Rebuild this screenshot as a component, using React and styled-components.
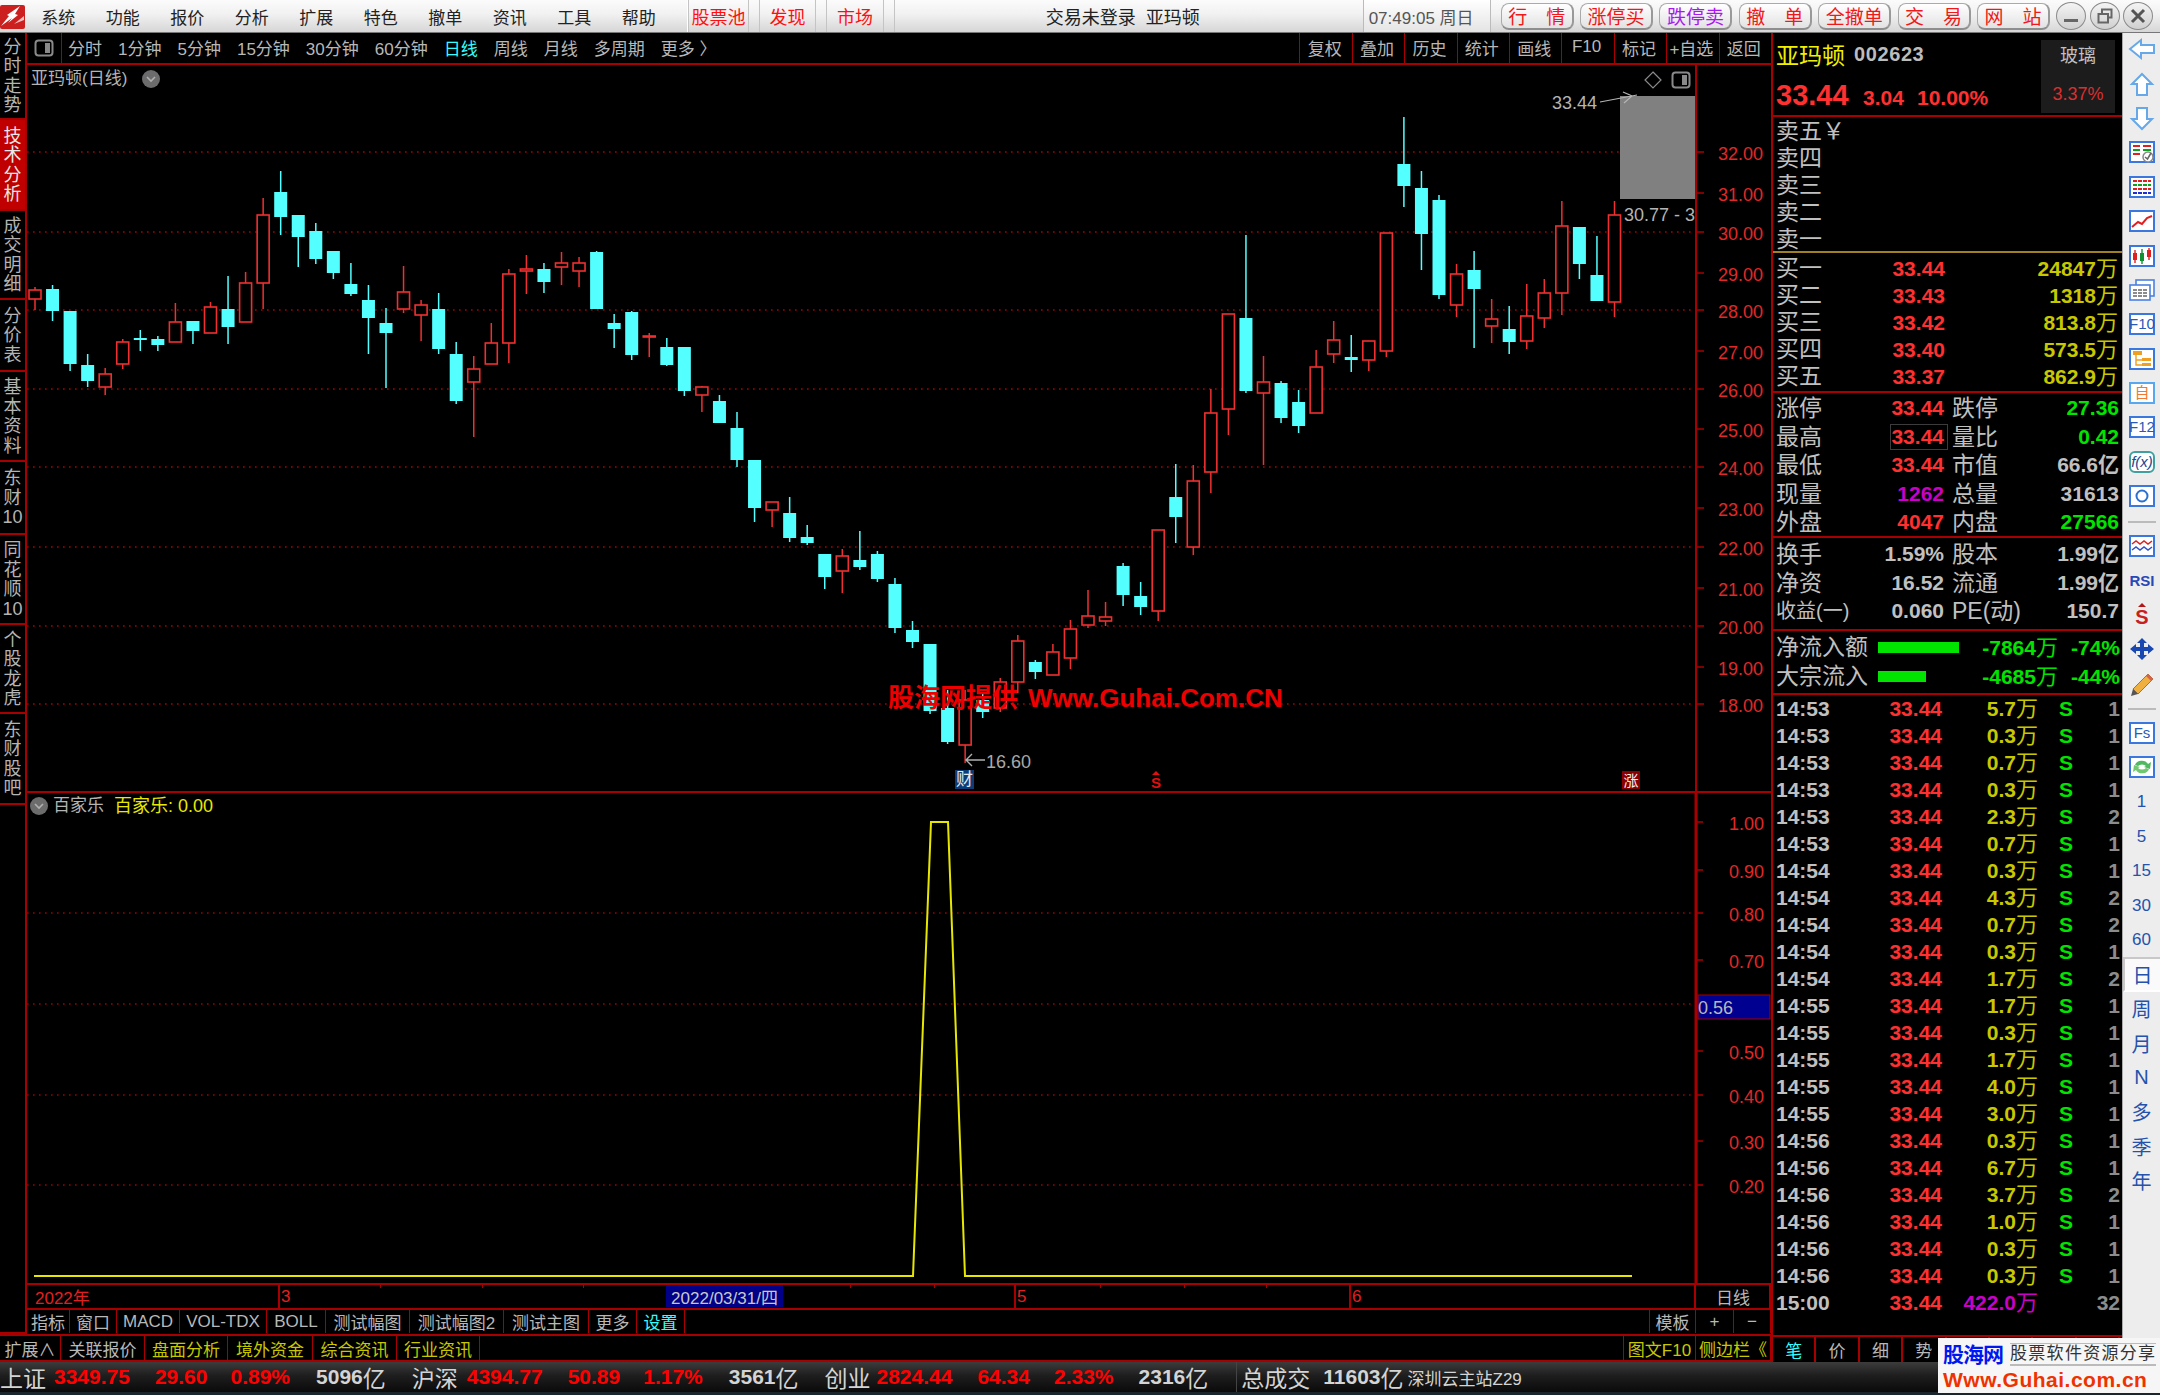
import React from 'react';
import styled, { createGlobalStyle } from 'styled-components';

const RED = '#a80000';
const NUM = '"Liberation Sans", "Noto Sans CJK SC", sans-serif';

// kind(1 = red hollow), wickTop, bodyTop, bodyBottom, wickBottom, all in page px
const candles = [
  [1, 287, 290, 299, 310], [0, 285, 289, 311, 321], [0, 311, 311, 364, 371], [0, 354, 365, 381, 387],
  [1, 368, 374, 387, 395], [1, 339, 342, 364, 369], [0, 330, 338, 339, 351], [0, 336, 339, 345, 351],
  [1, 303, 322, 342, 342], [0, 321, 321, 331, 344], [1, 302, 307, 333, 333], [0, 276, 309, 327, 344],
  [1, 272, 283, 322, 322], [1, 198, 215, 283, 309], [0, 171, 192, 217, 235], [0, 215, 215, 237, 267],
  [0, 223, 231, 259, 264], [0, 251, 251, 273, 279], [0, 263, 284, 294, 296], [0, 285, 300, 318, 354],
  [0, 308, 323, 333, 388], [1, 266, 292, 309, 313], [1, 300, 305, 315, 341], [0, 293, 309, 349, 354],
  [0, 342, 354, 401, 404], [1, 356, 369, 382, 437], [1, 323, 343, 364, 364], [1, 269, 274, 343, 363],
  [1, 255, 269, 271, 294], [0, 263, 269, 282, 293], [1, 252, 263, 267, 285], [1, 257, 263, 271, 287],
  [0, 251, 252, 309, 309], [0, 314, 323, 329, 348], [0, 311, 312, 355, 360], [1, 333, 336, 337, 357],
  [0, 338, 347, 365, 366], [0, 347, 347, 391, 396], [1, 386, 387, 395, 412], [0, 395, 401, 423, 423],
  [0, 412, 428, 460, 467], [0, 460, 460, 508, 522], [1, 502, 502, 510, 527], [0, 497, 513, 538, 542],
  [0, 525, 537, 543, 545], [0, 554, 554, 577, 589], [1, 549, 556, 571, 593], [0, 531, 560, 567, 570],
  [0, 551, 554, 579, 582], [0, 578, 584, 628, 633], [0, 621, 630, 642, 648], [0, 644, 644, 711, 714],
  [0, 690, 708, 742, 744], [1, 690, 700, 745, 763], [0, 693, 700, 712, 718], [1, 678, 682, 708, 712],
  [1, 635, 641, 682, 693], [0, 660, 662, 672, 679], [1, 644, 652, 675, 675], [1, 620, 629, 658, 669],
  [1, 590, 616, 625, 628], [1, 602, 617, 621, 626], [0, 563, 566, 595, 606], [0, 582, 596, 607, 615],
  [1, 530, 530, 611, 621], [0, 464, 497, 517, 543], [1, 465, 481, 547, 555], [1, 389, 413, 472, 493],
  [1, 314, 314, 409, 435], [0, 235, 318, 391, 393], [1, 356, 382, 393, 465], [0, 381, 383, 418, 423],
  [0, 390, 402, 426, 433], [1, 350, 367, 413, 413], [1, 321, 340, 354, 363], [0, 335, 357, 360, 372],
  [1, 341, 341, 360, 371], [1, 233, 233, 351, 357], [0, 117, 164, 186, 207], [0, 171, 188, 234, 270],
  [0, 195, 200, 295, 299], [1, 264, 274, 305, 317], [0, 251, 270, 289, 348], [1, 299, 319, 326, 343],
  [0, 306, 329, 342, 354], [1, 284, 316, 341, 349], [1, 279, 293, 318, 328], [1, 201, 226, 293, 315],
  [0, 227, 227, 264, 279], [0, 236, 275, 301, 301], [1, 201, 215, 302, 317],
];

const priceTicks = [
  ['32.00', 152], ['31.00', 193], ['30.00', 232], ['29.00', 273], ['28.00', 310], ['27.00', 351], ['26.00', 389],
  ['25.00', 429], ['24.00', 467], ['23.00', 508], ['22.00', 547], ['21.00', 588], ['20.00', 626], ['19.00', 667], ['18.00', 704],
];
const priceGrid = [152, 232, 310, 389, 467, 547, 626, 704];
const subTicks = [
  ['1.00', 822], ['0.90', 870], ['0.80', 913], ['0.70', 960], ['0.50', 1051], ['0.40', 1095], ['0.30', 1141], ['0.20', 1185],
];

const menus = ['系统', '功能', '报价', '分析', '扩展', '特色', '撤单', '资讯', '工具', '帮助'];
const redTabs = [['股票池', 61], ['发现', 57], ['市场', 58]];
const titleButtons = [['行\u3000情'], ['涨停买'], ['跌停卖', true], ['撤\u3000单'], ['全撤单'], ['交\u3000易'], ['网\u3000站']];
const periods = ['分时', '1分钟', '5分钟', '15分钟', '30分钟', '60分钟', '日线', '周线', '月线', '多周期', '更多 〉'];
const tools = ['复权', '叠加', '历史', '统计', '画线', 'F10', '标记', '+自选', '返回'];
const sideTabs = [
  [['分', '时', '走', '势'], 87], [['技', '术', '分', '析'], 91], [['成', '交', '明', '细'], 89], [['分', '价', '表'], 72],
  [['基', '本', '资', '料'], 90], [['东', '财', '10'], 73], [['同', '花', '顺', '10'], 90], [['个', '股', '龙', '虎'], 89], [['东', '财', '股', '吧'], 91],
];
const indicatorTabs = [['指标', 43], ['窗口', 47], ['MACD', 63], ['VOL-TDX', 87], ['BOLL', 59], ['测试幅图', 84], ['测试幅图2', 94], ['测试主图', 85], ['更多', 48], ['设置', 48, 'cyan']];
const extTabs = [['扩展∧', 61], ['关联报价', 84], ['盘面分析', 83, 'olive'], ['境外资金', 85, 'olive'], ['综合资讯', 84, 'olive'], ['行业资讯', 83, 'olive']];
const buys = [['买一', '33.44', '24847'], ['买二', '33.43', '1318'], ['买三', '33.42', '813.8'], ['买四', '33.40', '573.5'], ['买五', '33.37', '862.9']];
const stats = [
  ['涨停', '33.44', 'red', '跌停', '27.36', 'green'],
  ['最高', '33.44', 'red', '量比', '0.42', 'green', true],
  ['最低', '33.44', 'red', '市值', '66.6亿', 'gray'],
  ['现量', '1262', 'purple', '总量', '31613', 'gray'],
  ['外盘', '4047', 'red', '内盘', '27566', 'green'],
];
const stats2 = [
  ['换手', '1.59%', 'gray', '股本', '1.99亿', 'gray'],
  ['净资', '16.52', 'gray', '流通', '1.99亿', 'gray'],
  ['收益(一)', '0.060', 'gray', 'PE(动)', '150.7', 'gray'],
];
const trades = [
  ['14:53', '5.7', 1], ['14:53', '0.3', 1], ['14:53', '0.7', 1], ['14:53', '0.3', 1], ['14:53', '2.3', 2], ['14:53', '0.7', 1],
  ['14:54', '0.3', 1], ['14:54', '4.3', 2], ['14:54', '0.7', 2], ['14:54', '0.3', 1], ['14:54', '1.7', 2],
  ['14:55', '1.7', 1], ['14:55', '0.3', 1], ['14:55', '1.7', 1], ['14:55', '4.0', 1], ['14:55', '3.0', 1],
  ['14:56', '0.3', 1], ['14:56', '6.7', 1], ['14:56', '3.7', 2], ['14:56', '1.0', 1], ['14:56', '0.3', 1], ['14:56', '0.3', 1],
];
const ticker = [
  ['上证', 'cn', 0], ['3349.75', 'up', 8], ['29.60', 'up', 25], ['0.89%', 'up', 23], ['5096', 'amt', 26, '亿'],
  ['沪深', 'cn', 26], ['4394.77', 'up', 9], ['50.89', 'up', 25], ['1.17%', 'up', 23], ['3561', 'amt', 26, '亿'],
  ['创业', 'cn', 26], ['2824.44', 'up', 6], ['64.34', 'up', 25], ['2.33%', 'up', 24], ['2316', 'amt', 25, '亿'],
];

const colors = { red: '#ff3030', green: '#00e400', gray: '#c0c0c0', purple: '#c800c8', yellow: '#c8c800' };

const GlobalStyle = createGlobalStyle`
  html, body { margin: 0; padding: 0; background: #1a262c; }
  * { box-sizing: border-box; }
  body { font-family: ${NUM}; }
`;

const Page = styled.div`
  width: 2160px;
  height: 1395px;
  overflow: hidden;
  position: relative;
  display: flex;
  flex-direction: column;
  background: #000;
`;

/* title bar */
const TitleBar = styled.div`
  height: 33px;
  flex: none;
  display: flex;
  align-items: stretch;
  background: linear-gradient(#fbfbfb, #f1f1f1 45%, #d6d6d6);
  border-bottom: 1px solid #777;
  color: #222;
`;
const LogoCell = styled.div`
  width: 26px;
  flex: none;
  display: flex;
  align-items: center;
`;
const MenuItem = styled.div`
  width: 64.5px;
  flex: none;
  display: flex;
  align-items: center;
  justify-content: center;
  font-size: 17px;
`;
const MenuEnd = styled.div`
  width: 17px;
  flex: none;
  border-right: 1px solid #fff;
`;
const RedTab = styled.div`
  width: ${(p) => p.$w}px;
  flex: none;
  margin-right: 10px;
  display: flex;
  align-items: center;
  justify-content: center;
  color: #ff1010;
  font-size: 18px;
  border-left: 1px solid #c4c4c4;
  border-right: 1px solid #c4c4c4;
  &:last-of-type { margin-right: 0; }
`;
const WindowTitle = styled.div`
  flex: 1;
  display: flex;
  align-items: center;
  justify-content: center;
  padding-right: 12px;
  font-size: 18px;
  border-left: 1px solid #c4c4c4;
`;
const Clock = styled.div`
  width: 128px;
  flex: none;
  display: flex;
  align-items: center;
  padding-left: 5px;
  color: #555;
  font-size: 17px;
  background: linear-gradient(#fff, #e4e4e4);
  border-left: 1px solid #bbb;
  border-right: 1px solid #bbb;
`;
const ButtonGroup = styled.div`
  margin-left: 10px;
  display: flex;
  align-items: center;
  gap: 6.4px;
`;
const TitleButton = styled.div`
  width: 73px;
  height: 27px;
  display: flex;
  align-items: center;
  justify-content: center;
  font-size: 19px;
  color: ${(p) => (p.$purple ? '#a818f0' : '#f01818')};
  background: linear-gradient(#fff, #e2e2e2);
  border: 1px solid #aaa;
  border-bottom: 2px solid #8e8e8e;
  border-right: 2px solid #999;
  border-radius: 8px;
`;
const WindowControls = styled.div`
  margin-left: 6px;
  padding-right: 7px;
  display: flex;
  align-items: center;
  gap: 3.5px;
`;
const RoundControl = styled.div`
  width: 30px;
  height: 28px;
  border-radius: 50%;
  display: flex;
  align-items: center;
  justify-content: center;
  background: linear-gradient(#f4f4f4, #cfcfcf);
  border: 1.5px solid #8a8a8a;
`;

/* main area */
const Main = styled.div`
  height: 1329px;
  flex: none;
  display: flex;
`;
const LeftStack = styled.div`
  width: 1771px;
  flex: none;
  display: flex;
  flex-direction: column;
`;
const Workspace = styled.div`
  height: 1301px;
  flex: none;
  display: flex;
`;
const SideTabs = styled.div`
  width: 27px;
  flex: none;
  display: flex;
  flex-direction: column;
  border-right: 2px solid ${RED};
  border-bottom: 2px solid ${RED};
`;
const SideTab = styled.div`
  height: ${(p) => p.$h}px;
  flex: none;
  display: flex;
  flex-direction: column;
  align-items: center;
  justify-content: center;
  padding-top: 2px;
  font-size: 18px;
  line-height: 19.5px;
  color: ${(p) => (p.$active ? '#e8e8e8' : '#b4b4b4')};
  background: ${(p) => (p.$active ? '#c00000' : '#000')};
  border-bottom: 2px solid ${RED};
  span { display: block; }
`;
const ChartColumn = styled.div`
  flex: 1;
  min-width: 0;
  display: flex;
  flex-direction: column;
`;
const Toolbar = styled.div`
  height: 32px;
  flex: none;
  display: flex;
  align-items: stretch;
  border-bottom: 2px solid ${RED};
  color: #b8b8b8;
  font-size: 17px;
`;
const ToolbarIcon = styled.div`
  width: 35px;
  flex: none;
  display: flex;
  align-items: center;
  justify-content: center;
  border-right: 1px solid ${RED};
`;
const PeriodList = styled.div`
  flex: 1;
  display: flex;
  align-items: center;
  gap: 16px;
  padding: 0 0 2px 6px;
`;
const Period = styled.div`
  color: ${(p) => (p.$active ? '#3ff' : 'inherit')};
  white-space: nowrap;
`;
const ToolCell = styled.div`
  width: 52.4px;
  flex: none;
  display: flex;
  align-items: center;
  justify-content: center;
  padding: 0 3px 2px 0;
  border-left: 1px solid ${RED};
  white-space: nowrap;
`;
const PricePanel = styled.div`
  height: 728px;
  flex: none;
  position: relative;
  border-bottom: 2px solid ${RED};
`;
const IndicatorPanel = styled.div`
  height: 492px;
  flex: none;
  position: relative;
  border-bottom: 2px solid ${RED};
`;
const ChartSvg = styled.svg`
  display: block;
  width: 1744px;
  height: 100%;
  text {
    font-family: ${NUM};
    font-size: 18px;
    dominant-baseline: central;
  }
`;
const PaneHeader = styled.div`
  position: absolute;
  left: ${(p) => p.$left}px;
  top: ${(p) => p.$top}px;
  display: flex;
  align-items: center;
  gap: ${(p) => p.$gap}px;
  font-size: 17px;
  line-height: 20px;
  color: #b4b4b4;
`;
const ToggleDot = styled.div`
  width: 18px;
  height: 18px;
  border-radius: 50%;
  background: #6c6c6c;
  display: flex;
  align-items: center;
  justify-content: center;
`;
const FormulaValue = styled.span`
  color: #e8e800;
  margin-left: 5px;
  font-size: 18px;
`;
const Watermark = styled.div`
  position: absolute;
  left: 861px;
  top: 618px;
  display: flex;
  align-items: center;
  gap: 10px;
  color: #ee0000;
  font-size: 26px;
  line-height: 30px;
  font-weight: 700;
  white-space: nowrap;
`;
const PaneIcons = styled.div`
  position: absolute;
  right: 80px;
  top: 6px;
  display: flex;
  gap: 9px;
  align-items: center;
`;

/* time axis and tabs */
const DateRow = styled.div`
  height: 23px;
  flex: none;
  position: relative;
  display: flex;
  font-size: 17px;
  color: #e02020;
`;
const DateCell = styled.div`
  width: ${(p) => p.$w}px;
  flex: none;
  display: flex;
  align-items: center;
  padding-left: ${(p) => p.$pad || 1}px;
  border-right: 2px solid ${RED};
  color: ${(p) => p.$color || 'inherit'};
  justify-content: ${(p) => (p.$center ? 'center' : 'flex-start')};
  &:last-of-type { border-right: 0; }
`;
const DateCursor = styled.div`
  position: absolute;
  left: 639px;
  top: 0;
  width: 117px;
  height: 22px;
  display: flex;
  align-items: center;
  justify-content: center;
  background: #000088;
  color: #c8c8c8;
  font-size: 17px;
`;
const DateTick = styled.div`
  position: absolute;
  top: 0;
  left: ${(p) => p.$x}px;
  width: 1px;
  height: 3px;
  background: ${RED};
`;
const TabRow = styled.div`
  height: 25px;
  flex: none;
  display: flex;
  align-items: stretch;
  border-top: 2px solid ${RED};
`;
const ExtRow = styled(TabRow)`
  height: 28px;
  border-bottom: 2px solid ${RED};
`;
const TabCell = styled.div`
  width: ${(p) => p.$w}px;
  flex: none;
  display: flex;
  align-items: center;
  justify-content: center;
  border-right: 1.5px solid ${RED};
  font-size: 17px;
  white-space: nowrap;
  color: ${(p) => ({ cyan: '#3ff', olive: '#c8c800' }[p.$tone] || '#b8b8b8')};
`;
const RowSpacer = styled.div`
  flex: 1;
  border-right: 1.5px solid ${RED};
`;

/* quote panel */
const QuotePanel = styled.div`
  width: 351px;
  flex: none;
  display: flex;
  flex-direction: column;
  border-left: 2px solid ${RED};
  color: #c0c0c0;
`;
const QuoteHeader = styled.div`
  height: 84px;
  flex: none;
  position: relative;
  border-bottom: 2px solid ${RED};
  padding: 6px 0 0 3px;
`;
const NameLine = styled.div`
  display: flex;
  align-items: center;
  gap: 9px;
  height: 30px;
`;
const StockName = styled.div`
  color: #f0f000;
  font-size: 23px;
`;
const StockCode = styled.div`
  font-size: 20px;
  font-weight: 700;
  letter-spacing: 0.6px;
  color: #bcbcbc;
`;
const PriceLine = styled.div`
  display: flex;
  align-items: baseline;
  margin-top: 10px;
  color: #ff3030;
  font-weight: 700;
  font-size: 21px;
`;
const LastPrice = styled.div`
  font-size: 29px;
  width: 87px;
`;
const ChangeValue = styled.div`
  width: 54px;
`;
const SectorBox = styled.div`
  position: absolute;
  left: 268px;
  top: 7px;
  width: 74px;
  height: 73px;
  background: #1c1c1c;
  display: flex;
  flex-direction: column;
  align-items: center;
  justify-content: space-between;
  padding: 6px 0 9px;
  font-size: 18px;
  line-height: 20px;
`;
const SectorPct = styled.div`
  color: #d83030;
  font-size: 18px;
`;
const BookSide = styled.div`
  height: ${(p) => p.$h}px;
  flex: none;
  padding-top: ${(p) => p.$pad}px;
  border-bottom: 2px solid ${(p) => p.$line || RED};
`;
const BookRow = styled.div`
  height: 27px;
  line-height: 27px;
  display: grid;
  grid-template-columns: 51px 118px 173px;
  align-items: center;
  padding-left: 3px;
  font-size: 23px;
  white-space: nowrap;
`;
const BookPrice = styled.div`
  text-align: right;
  color: ${colors.red};
  font: 700 21px/27px ${NUM};
`;
const BookVolume = styled.div`
  text-align: right;
  color: ${colors.yellow};
  font: 700 21px/27px ${NUM};
`;
const Wan = styled.span`
  font-weight: 400;
  font-size: 22px;
  letter-spacing: 0;
`;
const StatBlock = styled.div`
  height: ${(p) => p.$h}px;
  flex: none;
  padding-top: ${(p) => p.$pad}px;
  border-bottom: 2px solid ${RED};
`;
const StatRow = styled.div`
  height: 28.5px;
  line-height: 28.5px;
  display: grid;
  grid-template-columns: 50px 122px 54px 118px;
  align-items: center;
  padding-left: 3px;
  font-size: 23px;
  white-space: nowrap;
`;
const StatLabel = styled.div`
  padding-left: ${(p) => (p.$second ? 4 : 0)}px;
  font-size: ${(p) => (p.$tight ? 20 : 23)}px;
`;
const StatValue = styled.div`
  text-align: right;
  justify-self: end;
  color: ${(p) => colors[p.$tone]};
  font: 700 21px/24px ${NUM};
  padding-right: ${(p) => (p.$flush ? 0 : 3)}px;
  border: 1px solid ${(p) => (p.$boxed ? '#3c3c3c' : 'transparent')};
`;
const FlowBlock = styled.div`
  height: 64px;
  flex: none;
  padding-top: 2px;
  border-bottom: 2px solid ${RED};
`;
const FlowRow = styled.div`
  height: 29px;
  line-height: 29px;
  display: grid;
  grid-template-columns: 102px 100px 80px 62px;
  align-items: center;
  padding-left: 3px;
  font-size: 23px;
  white-space: nowrap;
`;
const FlowBar = styled.div`
  width: ${(p) => p.$w}px;
  height: 11px;
  background: #00e400;
`;
const FlowValue = styled.div`
  text-align: right;
  color: ${colors.green};
  font: 700 21px/29px ${NUM};
`;
const TradeList = styled.div`
  flex: 1;
  min-height: 0;
`;
const TradeRow = styled.div`
  height: 27px;
  display: grid;
  grid-template-columns: 60px 106px 96px 56px 26px;
  align-items: center;
  padding-left: 3px;
  font: 700 21px/27px ${NUM};
  white-space: nowrap;
`;
const TradePrice = styled.div`
  text-align: right;
  color: ${colors.red};
`;
const TradeVolume = styled.div`
  text-align: right;
  color: ${(p) => (p.$big ? colors.purple : colors.yellow)};
`;
const TradeSide = styled.div`
  text-align: center;
  color: ${colors.green};
`;
const TradeCount = styled.div`
  text-align: right;
  color: #8c8c8c;
`;
const QuoteTabs = styled.div`
  height: 27px;
  flex: none;
  display: flex;
  border-top: 2px solid ${RED};
`;
const QuoteTab = styled.div`
  width: 43.4px;
  flex: none;
  display: flex;
  align-items: center;
  justify-content: center;
  border-right: 2px solid ${RED};
  font-size: 17px;
  color: ${(p) => (p.$active ? '#3ff' : '#b8b8b8')};
`;

/* icon rail */
const IconRail = styled.div`
  flex: 1;
  display: flex;
  flex-direction: column;
  align-items: center;
  background: #ededed;
  border-left: 1px solid #aaa;
`;
const RailSlot = styled.div`
  width: 100%;
  height: 34.4px;
  flex: none;
  display: flex;
  align-items: center;
  justify-content: center;
  color: #2452ac;
  font-size: ${(p) => (p.$small ? 17 : 20)}px;
`;
const RailActive = styled(RailSlot)`
  background: #fafafa;
  border: 2px solid #c8c8c8;
  border-right: 0;
  border-bottom-color: #fff;
`;
const RailRule = styled.div`
  width: 28px;
  height: 2px;
  margin: 7px 0 6px;
  background: #bbb;
  flex: none;
`;

/* ticker */
const TickerBar = styled.div`
  height: 30px;
  flex: none;
  display: flex;
  align-items: center;
  white-space: nowrap;
  background: linear-gradient(#3c3c3c, #1e1e1e 45%, #0a0a0a);
`;
const TickerItem = styled.div`
  margin-left: ${(p) => p.$ml}px;
  display: flex;
  align-items: center;
  font-size: ${(p) => (p.$kind === 'cn' ? 23 : 21)}px;
  font-weight: ${(p) => (p.$kind === 'cn' ? 400 : 700)};
  color: ${(p) => (p.$kind === 'up' ? '#ff0000' : '#d4d4d4')};
`;
const Yi = styled.span`
  font-size: 23px;
  font-weight: 400;
`;
const TickerDivider = styled.div`
  width: 1px;
  height: 100%;
  margin-left: 28px;
  background: #444;
`;
const ServerName = styled.div`
  margin-left: 4px;
  font-size: 17px;
  color: #d4d4d4;
`;
const PageEnd = styled.div`
  flex: 1;
  background: #1a262c;
`;

/* corner stamp */
const Stamp = styled.div`
  position: absolute;
  right: 0;
  bottom: 2px;
  width: 222px;
  height: 55px;
  background: #f6f6f6;
  padding: 3px 0 0 5px;
`;
const StampTop = styled.div`
  display: flex;
  align-items: center;
  gap: 7px;
  height: 27px;
`;
const StampName = styled.div`
  color: #0018f0;
  font-size: 21px;
  line-height: 27px;
  font-weight: 700;
  width: 60px;
  white-space: nowrap;
  letter-spacing: -1px;
`;
const StampSlogan = styled.div`
  font-size: 17px;
  letter-spacing: 1.3px;
  line-height: 22px;
  color: #333;
  white-space: nowrap;
  background-image: linear-gradient(#bbb 1px, transparent 1px);
  background-size: 100% 21px;
  border-bottom: 1px solid #bbb;
`;
const StampUrl = styled.div`
  color: #ee3300;
  font-size: 21px;
  line-height: 23px;
  font-weight: 700;
  letter-spacing: 0.5px;
  white-space: nowrap;
`;

const LogoMark = () => (
  <svg width="25" height="25" viewBox="0 0 25 25">
    <rect x="0" y="1" width="25" height="24" rx="2" fill="#cc2020" />
    <path d="M1 22 L9 12 L7 11 L20 2 L15 10 L18 11 L8 19 L12 14 Z" fill="#fff" />
    <path d="M14 20 L24 12 L24 16 Z" fill="#f6c0c0" />
  </svg>
);

const Chevron = () => (
  <svg width="12" height="12" viewBox="0 0 12 12">
    <path d="M2 4 L6 8 L10 4" fill="none" stroke="#b0b0b0" strokeWidth="1.6" />
  </svg>
);

const HalfBox = () => (
  <svg width="20" height="18" viewBox="0 0 20 18">
    <rect x="1.5" y="1.5" width="17" height="15" rx="3" fill="none" stroke="#8a8a8a" strokeWidth="2" />
    <rect x="11" y="4" width="5" height="10" fill="#8a8a8a" />
  </svg>
);

const Candle = ({ c, i }) => {
  const x = 35 + i * 17.55;
  const [up, wt, bt, bb, wb] = c;
  const color = up ? '#f03030' : '#54ffff';
  return (
    <g>
      <line x1={x} x2={x} y1={wt} y2={wb} stroke={color} strokeWidth="1.5" />
      {up ? (
        <rect x={x - 6} y={bt} width="12" height={Math.max(bb - bt, 1)} fill="#000" stroke={color} strokeWidth="1.6" />
      ) : (
        <rect x={x - 6.5} y={bt} width="13" height={Math.max(bb - bt, 2)} fill={color} />
      )}
    </g>
  );
};

const PriceChart = () => (
  <ChartSvg viewBox="27 65 1744 726">
    {priceGrid.map((y) => (
      <line key={y} x1="27" x2="1696" y1={y} y2={y} stroke="#b00000" strokeWidth="1.4" strokeDasharray="1.6 4.4" />
    ))}
    <rect x="1620" y="96" width="75" height="103" fill="#808080" />
    {candles.map((c, i) => <Candle key={i} c={c} i={i} />)}
    <line x1="1696" x2="1696" y1="65" y2="791" stroke={RED} strokeWidth="2" />
    {priceTicks.map(([label, y]) => (
      <g key={label}>
        <line x1="1696" x2="1704" y1={y} y2={y} stroke={RED} strokeWidth="1.5" />
        <text x="1718" y={y + 1.5} fill="#e02828">{label}</text>
      </g>
    ))}
    <text x="1552" y="103" fill="#b4b4b4">33.44</text>
    <path d="M1600 102 L1637 95 M1623 92 L1632 96 L1624 103" fill="none" stroke="#b4b4b4" strokeWidth="1.2" />
    <text x="1624" y="215" fill="#b4b4b4">30.77 - 3</text>
    <path d="M985 760 L966 760 M972 754 L966 760 L972 766" fill="none" stroke="#b0b0b0" strokeWidth="1.4" />
    <text x="986" y="762" fill="#a8a8a8">16.60</text>
    <rect x="955" y="770" width="19" height="19" fill="#0c3c78" />
    <text x="964.5" y="779" textAnchor="middle" fill="#e8e8e8" style={{ fontSize: 17 }}>财</text>
    <path d="M1156 771 L1160 775 L1152 775 Z" fill="#e01010" />
    <text x="1156" y="782" textAnchor="middle" fill="#e01010" fontWeight="700" style={{ fontSize: 15 }}>S</text>
    <rect x="1622" y="771" width="18" height="18" fill="#8a0000" />
    <text x="1631" y="780" textAnchor="middle" fill="#f0f0f0" style={{ fontSize: 15 }}>涨</text>
  </ChartSvg>
);

const IndicatorChart = () => (
  <ChartSvg viewBox="27 793 1744 490">
    {[913, 1004, 1095, 1185].map((y) => (
      <line key={y} x1="27" x2="1696" y1={y} y2={y} stroke="#a00000" strokeWidth="1.4" strokeDasharray="1.6 4.4" />
    ))}
    <path d="M34 1276 L913 1276 L931 822 L948 822 L965 1276 L1632 1276" fill="none" stroke="#e6e600" strokeWidth="2" />
    <line x1="1696" x2="1696" y1="793" y2="1283" stroke={RED} strokeWidth="3" />
    {subTicks.map(([label, y]) => (
      <g key={label}>
        <line x1="1696" x2="1703" y1={y} y2={y} stroke={RED} strokeWidth="1.5" />
        <text x="1729" y={y + 1.5} fill="#e02828">{label}</text>
      </g>
    ))}
    <rect x="1698" y="995" width="72" height="24" fill="#000090" stroke={RED} strokeWidth="1" />
    <text x="1698" y="1008" fill="#b8b8b8">0.56</text>
  </ChartSvg>
);

const Box = ({ stroke = '#3a78e0' }) => <rect x="2" y="2" width="24" height="20" fill="#fff" stroke={stroke} strokeWidth="2" />;
const Label = ({ children, fill = '#2a5ab8', size = 14, x = 14, y = 17, ...rest }) => (
  <text x={x} y={y} textAnchor="middle" fontSize={size} fill={fill} fontFamily={NUM} {...rest}>{children}</text>
);

const railDrawings = {
  left: <path d="M2 12 L13 3 L13 8 L26 8 L26 16 L13 16 L13 21 Z" fill="#fff" stroke="#66a8e8" strokeWidth="2" />,
  up: <path d="M14 2 L24 12 L19 12 L19 23 L9 23 L9 12 L4 12 Z" fill="#fff" stroke="#66a8e8" strokeWidth="2" />,
  down: <path d="M14 23 L24 13 L19 13 L19 2 L9 2 L9 13 L4 13 Z" fill="#fff" stroke="#66a8e8" strokeWidth="2" />,
  check: (
    <>
      <Box />
      <path d="M5 6 H12 M15 6 H23" stroke="#e02020" strokeWidth="2" />
      <path d="M5 10 H12 M15 10 H23" stroke="#10a020" strokeWidth="2" />
      <path d="M5 14 H12" stroke="#e02020" strokeWidth="2" />
      <circle cx="20" cy="17" r="5" fill="#fff" stroke="#888" strokeWidth="1.5" />
      <path d="M17 17 L19.5 19 L23 13" fill="none" stroke="#666" strokeWidth="1.5" />
    </>
  ),
  grid: (
    <>
      <Box />
      <path d="M5 6 H23" stroke="#e02020" strokeWidth="2" strokeDasharray="4 1" />
      <path d="M5 10 H23" stroke="#10a020" strokeWidth="2" strokeDasharray="4 1" />
      <path d="M5 14 H23" stroke="#e02020" strokeWidth="2" strokeDasharray="4 1" />
      <path d="M5 18 H23" stroke="#2030d0" strokeWidth="2" strokeDasharray="4 1" />
    </>
  ),
  line: (
    <>
      <Box />
      <path d="M4 18 L10 13 L14 15 L19 9 L24 7" fill="none" stroke="#e02020" strokeWidth="2" />
    </>
  ),
  candles: (
    <>
      <Box />
      <path d="M7 6 V19 M21 4 V16" stroke="#e02020" strokeWidth="1.4" />
      <path d="M14 5 V20" stroke="#109030" strokeWidth="1.4" />
      <rect x="5" y="9" width="4" height="7" fill="#e02020" />
      <rect x="12" y="9" width="4" height="8" fill="#109030" />
      <rect x="19" y="6" width="4" height="7" fill="#e02020" />
    </>
  ),
  windows: (
    <>
      <rect x="8" y="2" width="18" height="16" fill="#fff" stroke="#4a80e0" strokeWidth="1.6" />
      <rect x="2" y="7" width="20" height="15" fill="#fff" stroke="#4a80e0" strokeWidth="1.6" />
      <path d="M5 12 H19 M5 15 H19 M5 18 H19" stroke="#666" strokeWidth="1.4" strokeDasharray="4 1" />
    </>
  ),
  f10: (
    <>
      <Box />
      <Label size={15}>F10</Label>
    </>
  ),
  tree: (
    <>
      <Box />
      <path d="M8 8 V18 H14 M8 13 H14" fill="none" stroke="#f0a020" strokeWidth="1.4" />
      <rect x="5" y="4" width="9" height="4" fill="#f0a020" />
      <rect x="14" y="11" width="9" height="3" fill="#f0a020" />
      <rect x="14" y="16" width="9" height="3" fill="#f0a020" />
    </>
  ),
  self: (
    <>
      <Box stroke="#58a8f0" />
      <Label size={15} fill="#f07830">自</Label>
    </>
  ),
  f12: (
    <>
      <Box />
      <Label size={15}>F12</Label>
    </>
  ),
  fx: (
    <>
      <rect x="2" y="2" width="24" height="20" rx="5" fill="#fff" stroke="#40a0a0" strokeWidth="2" />
      <Label size={15} fontStyle="italic" fill="#204a90">f(x)</Label>
    </>
  ),
  circle: (
    <>
      <Box />
      <circle cx="14" cy="12" r="5.5" fill="none" stroke="#2a70d0" strokeWidth="2" />
    </>
  ),
  wave: (
    <>
      <Box />
      <path d="M4 10 L8 7 L12 10 L16 7 L20 10 L24 7" fill="none" stroke="#e02020" strokeWidth="1.5" />
      <path d="M4 16 L8 13 L12 16 L16 13 L20 16 L24 13" fill="none" stroke="#3050d0" strokeWidth="1.5" />
    </>
  ),
  rsi: <Label size={15} y={18} fill="#2848b8" fontWeight="700">RSI</Label>,
  dollar: (
    <>
      <path d="M14 1 L18 5 L10 5 Z" fill="#b01818" />
      <Label size={20} y={22} fill="#c82020" fontWeight="700">S</Label>
    </>
  ),
  move: (
    <path d="M14 1 L19 6 L16 6 L16 10 L20 10 L20 7 L26 12 L20 17 L20 14 L16 14 L16 18 L19 18 L14 23 L9 18 L12 18 L12 14 L8 14 L8 17 L2 12 L8 7 L8 10 L12 10 L12 6 L9 6 Z" fill="#1848b0" />
  ),
  pencil: (
    <>
      <path d="M5 18 L20 3 L25 8 L10 23 Z" fill="#f0b040" stroke="#a07830" strokeWidth="1" />
      <path d="M20 3 L25 8 L23 10 L18 5 Z" fill="#d86050" />
      <path d="M5 18 L10 23 L3 25 Z" fill="#555" />
    </>
  ),
  fs: (
    <>
      <Box />
      <Label size={15}>Fs</Label>
    </>
  ),
  refresh: (
    <>
      <Box />
      <path d="M7 10 A7 6 0 0 1 20 9 L23 7 L22 14 L16 12 L18 11 A5 4 0 0 0 10 11 Z" fill="#50b860" />
      <path d="M21 14 A7 6 0 0 1 8 15 L5 17 L6 10 L12 12 L10 13 A5 4 0 0 0 18 13 Z" fill="#70c870" />
    </>
  ),
};

const RailIcon = ({ name }) => (
  <RailSlot>
    <svg width="28" height="26" viewBox="0 0 28 26">{railDrawings[name]}</svg>
  </RailSlot>
);

const Sidebar = () => (
  <IconRail>
    {['left', 'up', 'down', 'check', 'grid', 'line', 'candles', 'windows', 'f10', 'tree', 'self', 'f12', 'fx', 'circle'].map((n) => <RailIcon key={n} name={n} />)}
    <RailRule />
    {['wave', 'rsi', 'dollar', 'move', 'pencil'].map((n) => <RailIcon key={n} name={n} />)}
    <RailRule />
    {['fs', 'refresh'].map((n) => <RailIcon key={n} name={n} />)}
    {['1', '5', '15', '30', '60'].map((t) => <RailSlot key={t} $small>{t}</RailSlot>)}
    <RailActive>日</RailActive>
    {['周', '月', 'N', '多', '季', '年'].map((t) => <RailSlot key={t}>{t}</RailSlot>)}
  </IconRail>
);

const Quote = () => (
  <QuotePanel>
    <QuoteHeader>
      <NameLine>
        <StockName>亚玛顿</StockName>
        <StockCode>002623</StockCode>
      </NameLine>
      <PriceLine>
        <LastPrice>33.44</LastPrice>
        <ChangeValue>3.04</ChangeValue>
        <div>10.00%</div>
      </PriceLine>
      <SectorBox>
        玻璃
        <SectorPct>3.37%</SectorPct>
      </SectorBox>
    </QuoteHeader>
    <BookSide $h={136} $pad={1} $line="#a08020">
      {['卖五￥', '卖四', '卖三', '卖二', '卖一'].map((s) => <BookRow key={s}>{s}</BookRow>)}
    </BookSide>
    <BookSide $h={140} $pad={2}>
      {buys.map(([name, price, vol]) => (
        <BookRow key={name}>
          {name}
          <BookPrice>{price}</BookPrice>
          <BookVolume>{vol}<Wan>万</Wan></BookVolume>
        </BookRow>
      ))}
    </BookSide>
    <StatBlock $h={145} $pad={1}>
      {stats.map((r) => (
        <StatRow key={r[0]}>
          <StatLabel>{r[0]}</StatLabel>
          <StatValue $tone={r[2]} $boxed={r[6]}>{r[1]}</StatValue>
          <StatLabel $second>{r[3]}</StatLabel>
          <StatValue $tone={r[5]} $flush>{r[4]}</StatValue>
        </StatRow>
      ))}
    </StatBlock>
    <StatBlock $h={93} $pad={2}>
      {stats2.map((r) => (
        <StatRow key={r[0]}>
          <StatLabel $tight={r[0].length > 2}>{r[0]}</StatLabel>
          <StatValue $tone={r[2]}>{r[1]}</StatValue>
          <StatLabel $second>{r[3]}</StatLabel>
          <StatValue $tone={r[5]} $flush>{r[4]}</StatValue>
        </StatRow>
      ))}
    </StatBlock>
    <FlowBlock>
      <FlowRow>
        净流入额
        <FlowBar $w={81} />
        <FlowValue>-7864<Wan>万</Wan></FlowValue>
        <FlowValue>-74%</FlowValue>
      </FlowRow>
      <FlowRow>
        大宗流入
        <FlowBar $w={48} />
        <FlowValue>-4685<Wan>万</Wan></FlowValue>
        <FlowValue>-44%</FlowValue>
      </FlowRow>
    </FlowBlock>
    <TradeList>
      {trades.map(([time, vol, count], i) => (
        <TradeRow key={i}>
          <div>{time}</div>
          <TradePrice>33.44</TradePrice>
          <TradeVolume>{vol}<Wan>万</Wan></TradeVolume>
          <TradeSide>S</TradeSide>
          <TradeCount>{count}</TradeCount>
        </TradeRow>
      ))}
      <TradeRow>
        <div>15:00</div>
        <TradePrice>33.44</TradePrice>
        <TradeVolume $big>422.0<Wan>万</Wan></TradeVolume>
        <TradeSide />
        <TradeCount>32</TradeCount>
      </TradeRow>
    </TradeList>
    <QuoteTabs>
      {['笔', '价', '细', '势', '', '', '', ''].map((t, i) => <QuoteTab key={i} $active={i === 0}>{t}</QuoteTab>)}
    </QuoteTabs>
  </QuotePanel>
);

export default function App() {
  return (
    <Page>
      <GlobalStyle />
      <TitleBar>
        <LogoCell><LogoMark /></LogoCell>
        {menus.map((m) => <MenuItem key={m}>{m}</MenuItem>)}
        <MenuEnd />
        {redTabs.map(([t, w]) => <RedTab key={t} $w={w}>{t}</RedTab>)}
        <WindowTitle>交易未登录&nbsp;&nbsp;亚玛顿</WindowTitle>
        <Clock>07:49:05 周日</Clock>
        <ButtonGroup>
          {titleButtons.map(([t, purple]) => <TitleButton key={t} $purple={purple}>{t}</TitleButton>)}
        </ButtonGroup>
        <WindowControls>
          <RoundControl>
            <svg width="16" height="16" viewBox="0 0 16 16"><rect x="1" y="11" width="14" height="3" fill="#666" /></svg>
          </RoundControl>
          <RoundControl>
            <svg width="16" height="16" viewBox="0 0 16 16"><path d="M5 5 V1.5 H14.5 V9.5 H11 M1.5 6 H11 V14.5 H1.5 Z" fill="none" stroke="#666" strokeWidth="2" /></svg>
          </RoundControl>
          <RoundControl>
            <svg width="16" height="16" viewBox="0 0 16 16"><path d="M2 2 L14 14 M14 2 L2 14" stroke="#555" strokeWidth="3" /></svg>
          </RoundControl>
        </WindowControls>
      </TitleBar>

      <Main>
        <LeftStack>
          <Workspace>
            <SideTabs>
              {sideTabs.map(([chars, h], i) => (
                <SideTab key={i} $h={h} $active={i === 1}>
                  {chars.map((c, j) => <span key={j}>{c}</span>)}
                </SideTab>
              ))}
            </SideTabs>
            <ChartColumn>
              <Toolbar>
                <ToolbarIcon><HalfBox /></ToolbarIcon>
                <PeriodList>
                  {periods.map((p) => <Period key={p} $active={p === '日线'}>{p}</Period>)}
                </PeriodList>
                {tools.map((t) => <ToolCell key={t}>{t}</ToolCell>)}
              </Toolbar>
              <PricePanel>
                <PriceChart />
                <PaneHeader $left={4} $top={4} $gap={15}>
                  亚玛顿(日线)
                  <ToggleDot><Chevron /></ToggleDot>
                </PaneHeader>
                <PaneIcons>
                  <svg width="18" height="18" viewBox="0 0 18 18"><path d="M9 1 L17 9 L9 17 L1 9 Z" fill="none" stroke="#8a8a8a" strokeWidth="1.2" /></svg>
                  <HalfBox />
                </PaneIcons>
                <Watermark>
                  <span>股海网提供</span>
                  <span>Www.Guhai.Com.CN</span>
                </Watermark>
              </PricePanel>
              <IndicatorPanel>
                <IndicatorChart />
                <PaneHeader $left={3} $top={3} $gap={5}>
                  <ToggleDot><Chevron /></ToggleDot>
                  百家乐
                  <FormulaValue>百家乐: 0.00</FormulaValue>
                </PaneHeader>
              </IndicatorPanel>
              <DateRow>
                <DateCell $w={253} $pad={8}>2022年</DateCell>
                <DateCell $w={736}>3</DateCell>
                <DateCell $w={335}>5</DateCell>
                <DateCell $w={345}>6</DateCell>
                <DateCell $w={75} $center $color="#b8b8b8">日线</DateCell>
                <DateCursor>2022/03/31/四</DateCursor>
                {[353, 455, 556, 823, 907, 1073, 1157, 1239].map((x) => <DateTick key={x} $x={x} />)}
              </DateRow>
              <TabRow>
                {indicatorTabs.map(([t, w, tone]) => <TabCell key={t} $w={w} $tone={tone}>{t}</TabCell>)}
                <RowSpacer />
                <TabCell $w={46}>模板</TabCell>
                <TabCell $w={38}>+</TabCell>
                <TabCell $w={37}>−</TabCell>
              </TabRow>
            </ChartColumn>
          </Workspace>
          <ExtRow>
            {extTabs.map(([t, w, tone]) => <TabCell key={t} $w={w} $tone={tone}>{t}</TabCell>)}
            <RowSpacer />
            <TabCell $w={72} $tone="olive">图文F10</TabCell>
            <TabCell $w={75} $tone="olive">侧边栏《</TabCell>
          </ExtRow>
        </LeftStack>
        <Quote />
        <Sidebar />
      </Main>

      <TickerBar>
        {ticker.map(([t, kind, ml, unit], i) => (
          <TickerItem key={i} $kind={kind} $ml={ml}>{t}{unit && <Yi>{unit}</Yi>}</TickerItem>
        ))}
        <TickerDivider />
        <TickerItem $kind="cn" $ml={4}>总成交</TickerItem>
        <TickerItem $kind="amt" $ml={13}>11603<Yi>亿</Yi></TickerItem>
        <ServerName>深圳云主站Z29</ServerName>
      </TickerBar>
      <PageEnd />

      <Stamp>
        <StampTop>
          <StampName>股海网</StampName>
          <StampSlogan>股票软件资源分享</StampSlogan>
        </StampTop>
        <StampUrl>Www.Guhai.com.cn</StampUrl>
      </Stamp>
    </Page>
  );
}
